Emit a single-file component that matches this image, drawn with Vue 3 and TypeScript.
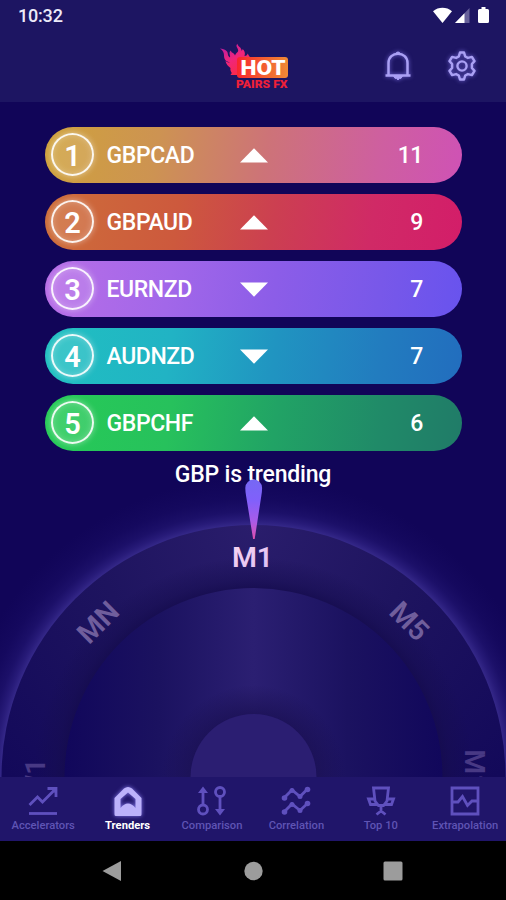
<script setup lang="ts">
interface Pair {
  rank: number
  symbol: string
  up: boolean
  score: number
  theme: string
}

const pairs: Pair[] = [
  { rank: 1, symbol: 'GBPCAD', up: true, score: 11, theme: 'gold' },
  { rank: 2, symbol: 'GBPAUD', up: true, score: 9, theme: 'ember' },
  { rank: 3, symbol: 'EURNZD', up: false, score: 7, theme: 'violet' },
  { rank: 4, symbol: 'AUDNZD', up: false, score: 7, theme: 'ocean' },
  { rank: 5, symbol: 'GBPCHF', up: true, score: 6, theme: 'leaf' },
]

const tabs: string[] = ['Accelerators', 'Trenders', 'Comparison', 'Correlation', 'Top 10', 'Extrapolation']
const activeTab = 'Trenders'
</script>

<template>
  <div class="phone">
    <header class="top">
      <div class="status">
        <span class="clock">10:32</span>
        <svg class="status-icons" width="58" height="18" viewBox="0 0 58 18">
          <path d="M0 4.200C5.500-.4 13.500-.4 19 4.200L9.500 16z" fill="#fff" />
          <path d="M36.500 1v15H22z" fill="#67619a" />
          <path d="M31.500 6.200V16H22z" fill="#fff" />
          <path d="M48.500 0h4v2h2q1.500 0 1.500 1.500v11q0 1.500-1.500 1.500h-8q-1.500 0-1.500-1.500v-11q0-1.500 1.500-1.500h2z" fill="#fff" />
        </svg>
      </div>
      <div class="toolbar">
        <svg class="logo" width="72" height="48" viewBox="0 0 72 48">
          <defs>
            <linearGradient id="flame" x1="0" y1="0" x2=".7" y2="1">
              <stop offset="0" stop-color="#b31aa8" />
              <stop offset=".5" stop-color="#f0257c" />
              <stop offset="1" stop-color="#fb2c3d" />
            </linearGradient>
            <linearGradient id="plate" x1="0" y1="0" x2="1" y2="0">
              <stop offset="0" stop-color="#f8242e" />
              <stop offset=".5" stop-color="#f35b30" />
              <stop offset="1" stop-color="#f08b35" />
            </linearGradient>
          </defs>
          <path d="M0 5.500c2 .5 5 .5 7 3 1.500 2 0 4 3 6 .8-2-2-5 1-7 0 2.500 3 2 4 5 1.500-4 5-3 2-8-1-2-.5-3 .5-3.800 0 3 4 3 4 7 1-.4 1-1 1-1.700 2 1.500 3 4 2 7 2 0 3-1 3-2.500 2 2 1 4 6 4.500L20 32H10.500c3-3-1-3 0-7C8 23 6 21 5.500 18c1.500 1.500 3 1.500 4.500 1.500-4-1-6-3-6-7 0-3-1-5-4-7z" fill="url(#flame)" />
          <rect x="17" y="14" width="51" height="21" rx="3" fill="url(#plate)" />
          <text x="20.500" y="31.700" class="logo-hot" textLength="45" lengthAdjust="spacingAndGlyphs">HOT</text>
          <text x="16" y="44.800" class="logo-sub" textLength="51.500" lengthAdjust="spacingAndGlyphs">PAIRS FX</text>
        </svg>
        <div class="actions">
          <svg class="glow" width="28" height="32" viewBox="0 0 28 32">
            <path d="M4.500 25V13C4.500 7 9 3.700 14 3.700S23.500 7 23.500 13v12M1.500 25.500h25" fill="none" stroke="#aaa0f4" stroke-width="2.500" />
            <path d="M12 4q0-2 2-2t2 2zM9.500 26h9l-1.500 2.300h-1.500L14 30l-1.500-1.700H11z" fill="#aaa0f4" stroke="#aaa0f4" />
          </svg>
          <svg class="glow" width="32" height="32" viewBox="0 0 32 32">
            <path d="M14 2.500h4l1.200 4 2.700 1.400 4-1 2.600 4.200-2.600 2.900v4l2.600 2.900-2.600 4.200-4-1-2.700 1.400-1.200 4h-4l-1.200-4-2.700-1.400-4 1-2.600-4.200L6.100 18v-4l-2.600-2.900 2.600-4.200 4 1 2.700-1.400z" fill="none" stroke="#aaa0f4" stroke-width="2.500" stroke-linejoin="round" />
            <circle cx="16" cy="16" r="4.600" fill="none" stroke="#aaa0f4" stroke-width="2.400" />
          </svg>
        </div>
      </div>
    </header>

    <main class="content">
      <ul class="pairs">
        <li v-for="pair in pairs" :key="pair.rank" class="pair" :class="pair.theme">
          <span class="rank">{{ pair.rank }}</span>
          <span class="symbol">{{ pair.symbol }}</span>
          <svg class="arrow" :class="{ down: !pair.up }" width="28" height="15" viewBox="0 0 28 15">
            <path d="M14 .3L28 14.500H0z" fill="#fff" />
          </svg>
          <span class="score">{{ pair.score }}</span>
        </li>
      </ul>
      <p class="headline">GBP is trending</p>

      <div class="dial-wrap">
        <svg class="dial" width="506" height="317" viewBox="0 460 506 317">
          <defs>
            <radialGradient id="halo" gradientUnits="userSpaceOnUse" cx="253.500" cy="776" r="316">
              <stop offset=".795" stop-color="#5548b4" stop-opacity=".55" />
              <stop offset=".815" stop-color="#4c3eae" stop-opacity=".38" />
              <stop offset=".84" stop-color="#4236a4" stop-opacity=".22" />
              <stop offset=".88" stop-color="#382c98" stop-opacity=".1" />
              <stop offset=".95" stop-color="#2c2088" stop-opacity="0" />
            </radialGradient>
            <radialGradient id="rim" gradientUnits="userSpaceOnUse" cx="253.500" cy="524" r="350">
              <stop offset="0" stop-color="#2a1d6c" />
              <stop offset=".45" stop-color="#1e145f" />
              <stop offset="1" stop-color="#13095a" />
            </radialGradient>
            <linearGradient id="face" x1="0" y1="0" x2="1" y2="0">
              <stop offset="0" stop-color="#11075b" />
              <stop offset=".25" stop-color="#1b1260" />
              <stop offset=".5" stop-color="#2b1f72" />
              <stop offset=".75" stop-color="#1b1260" />
              <stop offset="1" stop-color="#11075b" />
            </linearGradient>
            <radialGradient id="edge" gradientUnits="userSpaceOnUse" cx="253.500" cy="776" r="220">
              <stop offset=".84" stop-color="#140b4c" stop-opacity=".9" />
              <stop offset=".9" stop-color="#160d50" stop-opacity=".5" />
              <stop offset="1" stop-color="#160d50" stop-opacity="0" />
            </radialGradient>
            <radialGradient id="hubShade" gradientUnits="userSpaceOnUse" cx="253.500" cy="776" r="92">
              <stop offset=".67" stop-color="#1a1053" stop-opacity=".75" />
              <stop offset="1" stop-color="#1a1053" stop-opacity="0" />
            </radialGradient>
            <linearGradient id="needle" x1="0" y1="0" x2="0" y2="1">
              <stop offset="0" stop-color="#7668f4" />
              <stop offset=".35" stop-color="#8160fb" />
              <stop offset=".7" stop-color="#a95be8" />
              <stop offset="1" stop-color="#df4fae" />
            </linearGradient>
            <linearGradient id="label" x1="0" y1="0" x2="1" y2="1">
              <stop offset="0" stop-color="#fbd6ef" />
              <stop offset="1" stop-color="#d9bbf6" />
            </linearGradient>
          </defs>
          <circle cx="253.500" cy="776" r="316" fill="url(#halo)" />
          <circle cx="253.500" cy="776" r="252" fill="url(#rim)" />
          <circle cx="253.500" cy="776" r="220" fill="url(#edge)" />
          <circle cx="253.500" cy="776" r="189" fill="url(#face)" />
          <circle cx="253.500" cy="776" r="92" fill="url(#hubShade)" />
          <circle cx="253.500" cy="776" r="63" fill="#2b1e72" />
          <g class="frames">
            <text x="252.500" y="566" class="current" fill="url(#label)">M1</text>
            <text x="253" y="566.500" class="side" transform="rotate(-45 253.500 776)">MN</text>
            <text x="253.500" y="565.500" class="side" transform="rotate(45 253.500 776)">M5</text>
            <text x="251.500" y="567" class="far" transform="rotate(-90 253.500 776)">W1</text>
            <text x="254.500" y="565" class="far" transform="rotate(90 253.500 776)">M15</text>
          </g>
          <path d="M245.300 487a8.400 8.400 0 0 1 16.800 0q0 3-.8 8L254.700 538h-1.600L246.100 495q-.8-5-.8-8z" fill="url(#needle)" />
        </svg>
      </div>
    </main>

    <nav class="tabs">
      <a v-for="tab in tabs" :key="tab" class="tab" :class="{ active: tab === activeTab }">
        <svg class="tab-icon" width="32" height="32" viewBox="0 0 32 32">
          <g v-if="tab === 'Accelerators'">
            <path d="M2.500 20l8-8 5 5L28 4.500M20.500 3.500H29V12" />
            <path d="M23 3h7v7z" class="solid" />
            <path d="M2 28.500h28" />
          </g>
          <path v-else-if="tab === 'Trenders'" d="M2.500 29.500V13L12 3.500Q16 .5 20 3.500L29.500 13v16.500q0 1.500-1.500 1.500H4q-1.500 0-1.500-1.500zM8.500 14v9Q12 18.500 16 18.500T23.500 23v-9L16 7.500z" class="home" />
          <g v-else-if="tab === 'Comparison'">
            <circle cx="7" cy="24.500" r="4.500" />
            <circle cx="24" cy="7" r="4.500" />
            <path d="M7 20V5M24 11.500V27" />
            <path d="M7 1.500L12 8H2zM24 30.500L19 24h10z" class="solid" />
          </g>
          <g v-else-if="tab === 'Correlation'">
            <path d="M4 13l8-8 8 6.500 8-8M4 27l8-8 8 6.500 8-7.500" />
            <g class="solid">
              <circle cx="4.500" cy="13" r="2.800" /><circle cx="12" cy="5.500" r="2.500" /><circle cx="20" cy="11.500" r="2.500" /><circle cx="27.500" cy="4.500" r="2.800" />
              <circle cx="4.500" cy="27" r="2.800" /><circle cx="12" cy="19.500" r="2.500" /><circle cx="20" cy="25.500" r="2.500" /><circle cx="27.500" cy="18.500" r="2.800" />
            </g>
          </g>
          <g v-else-if="tab === 'Top 10'">
            <path d="M8.500 3h15l-1.500 13-3.500 4.500h-5L10 16z" />
            <path d="M10 14H3.500l2 5.500H12M22 14h6.500l-2 5.500H20M16 20.500v7M11.500 29.500l4.500-3.500 4.500 3.500" />
          </g>
          <path v-else d="M3 3h26v26H3zM3 17h6l4.500-5.500 5 9L23 16h6" />
        </svg>
        <span class="tab-label">{{ tab }}</span>
      </a>
    </nav>

    <footer class="system">
      <svg width="20" height="22" viewBox="0 0 20 22"><path d="M.5 11L19 1v20z" fill="#9c9c9c" /></svg>
      <svg width="20" height="20" viewBox="0 0 20 20"><circle cx="10.500" cy="10" r="9.200" fill="#9c9c9c" /></svg>
      <svg width="20" height="20" viewBox="0 0 20 20"><rect x=".5" y=".5" width="19" height="19" rx="1.500" fill="#9c9c9c" /></svg>
    </footer>
  </div>
</template>

<style>
body {
  margin: 0;
  background: #110558;
}
</style>

<style scoped>
.phone {
  width: 506px;
  height: 900px;
  display: flex;
  flex-direction: column;
  overflow: hidden;
  background: #110558;
  color: #fff;
  font-family: Roboto, 'Liberation Sans', sans-serif;
}
.top {
  flex: none;
  height: 102px;
  background: #1d1562;
}
.status {
  height: 32px;
  display: flex;
  align-items: center;
  justify-content: space-between;
  padding: 0 15px 0 18px;
}
.clock {
  font-size: 18px;
  line-height: 32px;
  font-weight: 500;
  letter-spacing: -0.2px;
  color: #eceaf8;
}
.status-icons {
  margin-top: -1px;
}
.toolbar {
  display: grid;
  grid-template-columns: 1fr 72px 1fr;
  height: 70px;
  align-items: start;
}
.logo {
  grid-column: 2;
  margin: 11px 0 0 3px;
}
.logo-hot {
  font-size: 20px;
  font-weight: 900;
  fill: #fff;
}
.logo-sub {
  font-size: 10.5px;
  font-weight: 900;
  fill: #ef2038;
}
.actions {
  display: flex;
  align-items: center;
  justify-content: flex-end;
  gap: 34px;
  padding: 18px 28px 0 0;
}
.glow {
  filter: drop-shadow(0 0 2px rgba(139, 125, 245, 0.75));
}
.content {
  flex: 1;
  min-height: 0;
  display: flex;
  flex-direction: column;
}
.pairs {
  list-style: none;
  margin: 0;
  padding: 25px 44px 0 45px;
  display: flex;
  flex-direction: column;
  gap: 11.5px;
}
.pair {
  box-sizing: border-box;
  height: 55.5px;
  border-radius: 28px;
  padding: 0 39px 0 6px;
  display: grid;
  grid-template-columns: 44px 144.5px 28px 1fr;
  align-items: center;
}
.gold { background: linear-gradient(98deg, #cfa23c, #cd9352 27%, #cd7378 53%, #ce5fa0 80%, #cf52b5); }
.ember { background: linear-gradient(98deg, #cd6e3a, #cd593d 32%, #cc3f51 55%, #d02a66 78%, #d31d69); }
.violet { background: linear-gradient(98deg, #b86ee7, #a267e9 30%, #8c5de8 55%, #7858e9 80%, #6853ee); }
.ocean { background: linear-gradient(98deg, #20c0c1, #21b3c4 30%, #2094c1 55%, #227cbf 80%, #226dbe); }
.leaf { background: linear-gradient(98deg, #26cb57, #27c15c 30%, #21a365 55%, #208a68 80%, #207b68); }
.rank {
  box-sizing: border-box;
  width: 43px;
  height: 43px;
  border: 2px solid rgba(255, 255, 255, 0.9);
  border-radius: 50%;
  background: rgba(255, 255, 255, 0.12);
  box-shadow: 0 0 6px rgba(255, 255, 255, 0.45), inset 0 0 6px rgba(255, 255, 255, 0.25);
  text-align: center;
  font-size: 29px;
  line-height: 42px;
  font-weight: 600;
}
.symbol,
.score {
  padding-top: 3px;
  font-size: 23px;
  line-height: 28px;
  font-weight: 500;
  letter-spacing: -0.4px;
}
.symbol {
  padding-left: 11.5px;
}
.score {
  text-align: right;
}
.arrow {
  margin-top: 1px;
}
.arrow.down {
  transform: rotate(180deg);
}
.headline {
  margin: 10px 0 0;
  height: 28px;
  text-align: center;
  font-size: 23px;
  line-height: 28px;
  font-weight: 500;
  letter-spacing: -0.2px;
}
.dial-wrap {
  position: relative;
  margin-top: -28px;
  height: 317px;
}
.dial {
  display: block;
}
.frames {
  font-size: 28.5px;
  font-weight: 500;
  text-anchor: middle;
}
.current {
  font-weight: 600;
}
.side {
  fill: #705e9c;
  font-weight: 600;
}
.far {
  fill: #483984;
  font-weight: 600;
}
.tabs {
  flex: none;
  height: 64px;
  padding-left: 1px;
  display: grid;
  grid-template-columns: repeat(6, 84.4px);
  background: #20156a;
  position: relative;
}
.tab {
  display: flex;
  flex-direction: column;
  align-items: center;
  padding-top: 8px;
  color: #5f54b4;
}
.tab-icon {
  flex: none;
  fill: none;
  stroke: #5f50be;
  stroke-width: 2.8;
}
.tab-icon .solid {
  fill: #5f50be;
  stroke: none;
}
.tab-icon .home {
  fill: #bcb2fb;
  fill-rule: evenodd;
  stroke: none;
}
.active .tab-icon {
  filter: drop-shadow(0 0 2px #8478e8);
}
.tab-label {
  margin-top: 2px;
  font-size: 11.2px;
  line-height: 13px;
  font-weight: 500;
  white-space: nowrap;
}
.active .tab-label {
  color: #fff;
  font-weight: 700;
}
.system {
  flex: none;
  height: 59px;
  box-sizing: border-box;
  padding: 0 103px 0 102px;
  display: flex;
  align-items: center;
  justify-content: space-between;
  background: #000;
}
</style>
